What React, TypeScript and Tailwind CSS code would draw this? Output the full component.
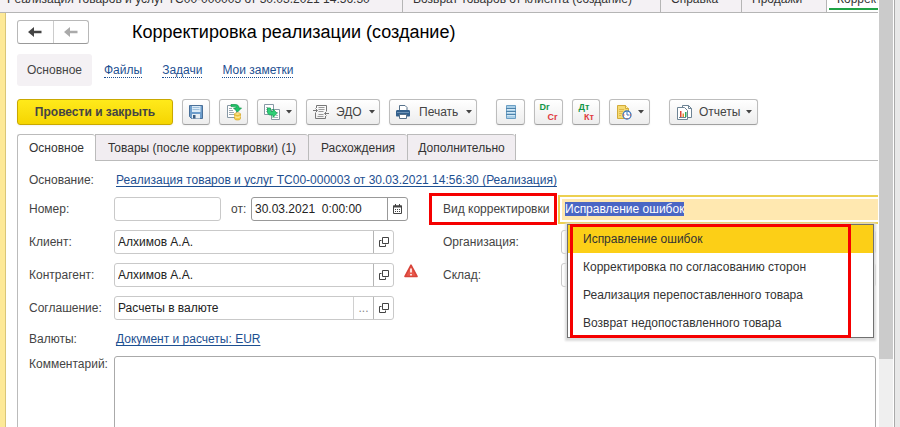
import { ReactNode, useEffect, useRef, useState } from 'react';

const windows = [
  {
    title: 'Реализация товаров и услуг ТС00-000003 от 30.03.2021 14:56:30',
    size: 'w-[403px] pl-[7px]',
  },
  { title: 'Возврат товаров от клиента (создание)', size: 'w-[258px] pl-[10px]' },
  { title: 'Справка', size: 'w-[81px] pl-[10px]' },
  { title: 'Продажи', size: 'w-[85px] pl-[10px]' },
];

const sections = ['Файлы', 'Задачи', 'Мои заметки'];

const pages = [
  { title: 'Товары (после корректировки) (1)', size: 'w-[213px]' },
  { title: 'Расхождения', size: 'w-[99px]' },
  { title: 'Дополнительно', size: 'w-[108px]' },
];

const kinds = [
  'Исправление ошибок',
  'Корректировка по согласованию сторон',
  'Реализация перепоставленного товара',
  'Возврат недопоставленного товара',
];

function SaveIcon() {
  return (
    <svg width="16" height="16" viewBox="0 0 16 16">
      <path d="M1.500 1.500h13v13h-11l-2-2z" fill="#6d9dcb" stroke="#4a7099" />
      <path d="M4 2h8.500v6H4z" fill="#dcebf7" />
      <path d="M4.500 3.500h7M4.500 5.500h7" stroke="#9dbfdc" />
      <path d="M4 10h8v4.500H4z" fill="#e8eef3" />
      <path d="M5 11h2.500v3.500H5z" fill="#3c5d80" />
    </svg>
  );
}

function PostIcon() {
  return (
    <svg width="18" height="18" viewBox="0 0 18 18">
      <path d="M2.500 2.500h9v12h-9z" fill="#fff" stroke="#8798a5" />
      <path d="M4 5.500h3M4 7.500h4M4 9.500h5M4 11.500h5" stroke="#9aa8b2" />
      <path
        d="M6 1.500h4c3 0 4 1.500 4 3.500h2.500L12.500 9 8.500 5H11c0-1-.6-1.400-2-1.400H6z"
        fill="#1fc268"
        stroke="#0f9649"
        strokeWidth=".7"
      />
      <path
        d="M9.500 11v4.500c0 2 6 2 6 0V11z"
        fill="#f6ce49"
        stroke="#d3a52a"
        strokeWidth=".7"
      />
      <ellipse cx="12.500" cy="11" rx="3" ry="1.300" fill="#fde88d" stroke="#d3a52a" strokeWidth=".7" />
      <path d="M9.500 13.300c1 1.400 5 1.400 6 0" fill="none" stroke="#fff3b8" />
    </svg>
  );
}

function BasedOnIcon() {
  return (
    <svg width="18" height="18" viewBox="0 0 18 18">
      <path d="M1.500 1.500h9v10h-9z" fill="#fff" stroke="#8798a5" />
      <path d="M3 4.500h2M3 6.500h2M3 8.500h2" stroke="#a8b4bd" />
      <path d="M8.500 6.500h8v10h-8z" fill="#fff" stroke="#8798a5" />
      <path d="M13 9.500h2M13 12.500h2M11 14.500h4" stroke="#a8b4bd" />
      <path
        d="M4.500 5h3v2.500c0 .7.500 1 1.200 1H10V6l4 4.300-4 4.200V12H8c-2.300 0-3.500-1.200-3.500-3.200z"
        fill="#2fcf78"
        stroke="#12a050"
        strokeWidth=".8"
      />
    </svg>
  );
}

function EdoIcon() {
  return (
    <svg width="16" height="16" viewBox="0 0 16 16" fill="none" stroke="#777">
      <path d="M3.500 4V1.500h10V7M2.500 9v5.500h10V12" />
      <path d="M5.500 3.500h6M5.500 5.500h6M5.500 7.500h5M5.500 10.500h5M4.500 12.500h6" stroke="#999" />
      <path d="M0 6.500h4M2.500 4.500l2 2-2 2M16 9.500h-4M13.500 7.500l-2 2 2 2" />
    </svg>
  );
}

function PrintIcon() {
  return (
    <svg width="16" height="16" viewBox="0 0 16 16">
      <path d="M4.500 7V1.500h5.500l2 2V7" fill="#fff" stroke="#56718a" />
      <path d="M1 7.500C1 6.500 1.500 6 2.500 6h11c1 0 1.500.5 1.500 1.500v4c0 .6-.4 1-1 1H2c-.6 0-1-.4-1-1z" fill="#33618e" />
      <path d="M2 8.500h12" stroke="#6d93b7" />
      <path d="M4.500 10.500h7v4h-7z" fill="#fff" stroke="#56718a" />
    </svg>
  );
}

function RegisterIcon() {
  return (
    <svg width="12" height="16" viewBox="0 0 12 16">
      <path d="M1.500 1.500h9v13h-9z" fill="#a9cfe8" stroke="#6b9fc4" />
      <path d="M1 4.500h10M1 7.500h10M1 10.500h10" stroke="#4f83ab" />
      <path d="M2 5.500h8M2 8.500h8M2 11.500h8" stroke="#d3e8f5" />
    </svg>
  );
}

function ScheduleIcon() {
  return (
    <svg width="18" height="18" viewBox="0 0 18 18">
      <path d="M2.500 2.500h8l3 3v10h-11z" fill="#f5da72" stroke="#d2ab3a" />
      <path d="M10.500 2.500v3h3" fill="#fff2b8" stroke="#d2ab3a" />
      <path d="M4 6.500h5M4 8.500h4M4 10.500h3M4 12.500h2" stroke="#dfb94b" />
      <circle cx="12" cy="12" r="4" fill="#fff" stroke="#3a78bd" strokeWidth="1.300" />
      <path d="M12 9v3h2" stroke="#3a78bd" fill="none" />
      <path d="M8 12h1.500M14.500 12H16M12 15v1" stroke="#e2483d" />
    </svg>
  );
}

function ReportIcon() {
  return (
    <svg width="17" height="17" viewBox="0 0 17 17">
      <path d="M6.500 1.500h6l3 3v9h-9z" fill="#fff" stroke="#6d8394" />
      <path d="M12.500 1.500v3h3" fill="none" stroke="#6d8394" />
      <path d="M1.500 3.500h7l3 3v9h-10z" fill="#fff" stroke="#6d8394" />
      <path d="M3 13.500h7" stroke="#6d8394" />
      <path d="M4 7h1.500v6H4z" fill="#e0443a" />
      <path d="M6.500 9.500H8V13H6.500z" fill="#e58a2e" />
      <path d="M9 8h1.500v5H9z" fill="#2fa95a" />
    </svg>
  );
}

function CalendarIcon() {
  return (
    <svg width="9" height="10" viewBox="0 0 9 10">
      <path d="M.5 2h8v7.500h-8z" fill="#fff" stroke="#444" />
      <path d="M0 1.500h9v2H0z" fill="#444" />
      <path d="M2.500 0v2M6.500 0v2" stroke="#444" />
      <path d="M2 5.500h5M2 7.500h5" stroke="#444" strokeDasharray="1 1" />
    </svg>
  );
}

function OpenIcon() {
  return (
    <svg width="10" height="10" viewBox="0 0 10 10" fill="none" stroke="#444">
      <path d="M3.500.500h6v6h-6z" />
      <path d="M2.500 3.500h-2v6h6V7.500" />
    </svg>
  );
}

function WarningIcon() {
  return (
    <svg width="14" height="14" viewBox="0 0 14 14">
      <path
        d="M7 1.200 13 12.500H1z"
        fill="#e9584b"
        stroke="#d8443a"
        strokeWidth="1.600"
        strokeLinejoin="round"
      />
      <path d="M7 4.500v4M7 10v1.500" stroke="#fff" strokeWidth="1.600" />
    </svg>
  );
}

function Arrow({ className }: { className: string }) {
  return (
    <svg width="14" height="10" viewBox="0 0 14 10" className={className}>
      <path d="M0 5 6 0v3.800h7.500v2.400H6V10z" fill="currentColor" />
    </svg>
  );
}

function Caret() {
  return (
    <svg width="6" height="4" viewBox="0 0 6 4">
      <path d="M0 0h6L3 3.500z" fill="#444" />
    </svg>
  );
}

type ToolButtonProps = {
  label: string;
  className: string;
  children: ReactNode;
};

function ToolButton({ label, className, children }: ToolButtonProps) {
  return (
    <button
      type="button"
      aria-label={label}
      className={`flex h-[26px] shrink-0 items-center rounded-[3px] border border-[#bdbdbd] border-b-[#a0a0a0] bg-linear-to-b from-white to-[#ededed] shadow-xs ${className}`}>
      {children}
    </button>
  );
}

type FieldProps = {
  id: string;
  label: string;
  value: string;
  more?: boolean;
};

function ReferenceField({ id, label, value, more }: FieldProps) {
  return (
    <>
      <label htmlFor={id} className="w-[85px] shrink-0">
        {label}
      </label>
      <div className="flex h-6 w-[280px] shrink-0 rounded-[3px] border border-[#c9c9c9] bg-white">
        <input
          id={id}
          defaultValue={value}
          className="min-w-0 flex-1 px-[3px] text-[#222] outline-none"
        />
        {more && (
          <button
            type="button"
            aria-label="Выбрать"
            className="w-5 border-l border-[#d0d0d0] text-[#888]">
            ...
          </button>
        )}
        <button
          type="button"
          aria-label="Открыть"
          className="flex w-5 items-center justify-center border-l border-[#b5b5b5]">
          <OpenIcon />
        </button>
      </div>
    </>
  );
}

function KindField() {
  const [kind, setKind] = useState(kinds[0]);
  const ref = useRef<HTMLInputElement>(null);

  useEffect(() => {
    ref.current?.focus();
    ref.current?.select();
  }, []);

  return (
    <div className="relative flex-1">
      <div className="h-[29px] border-2 border-r-0 border-[#ecd050] bg-white p-[2px] pr-0">
        <input
          id="kind"
          ref={ref}
          value={kind}
          onChange={(event) => setKind(event.target.value)}
          className="block h-full w-full bg-[#ffe8b0] px-[3px] text-[#222] outline-none selection:bg-[#4a66c4] selection:text-white"
        />
      </div>
      <div
        role="listbox"
        aria-label="Вид корректировки"
        className="absolute top-[29px] right-[4px] left-[9px] z-10 border border-[#707070] bg-white shadow-[0_1px_2px_2px_#dcdcdc]">
        {kinds.map((item) => (
          <button
            key={item}
            type="button"
            role="option"
            aria-selected={item === kind}
            onClick={() => setKind(item)}
            className="block h-7 w-full pl-[15px] text-left text-[#333] aria-selected:bg-[#fccf17]">
            {item}
          </button>
        ))}
        <div className="pointer-events-none absolute -inset-y-px right-[22px] left-[2px] border-[3px] border-[#f50000]" />
      </div>
    </div>
  );
}

export default function App() {
  return (
    <div className="flex h-screen overflow-hidden bg-white font-['Liberation_Sans',Arial,sans-serif] text-[12px] leading-4 text-[#444]">
      <div className="flex min-w-0 flex-1 flex-col">
        <nav className="flex h-[13px] shrink-0 items-end border-b border-[#b5b5b5] bg-[#f4f1f4] whitespace-nowrap text-[#333]">
          {windows.map((item) => (
            <a
              key={item.title}
              href="#"
              className={`shrink-0 overflow-hidden border-r border-[#b5b5b5] pb-[5px] ${item.size}`}>
              {item.title}
            </a>
          ))}
          <a
            href="#"
            aria-current="page"
            className="min-w-0 flex-1 overflow-hidden bg-white pb-[2px] pl-[2px]">
            <span className="block border-b-2 border-[#1fa345] pb-px pl-2">
              Корректировка реализации
            </span>
          </a>
        </nav>

        <div className="flex min-h-0 flex-1">
          <div className="w-[6px] shrink-0 border-r border-[#d9c678] bg-[#fde998]" />
          <main className="flex min-w-0 flex-1 flex-col pl-[11px]">
            <header className="flex items-center gap-[43px] pt-[7px]">
              <div className="flex h-6 w-[72px] rounded-[3px] border border-[#b8b8b8] border-b-[#999]">
                <button
                  type="button"
                  aria-label="Назад"
                  className="flex flex-1 items-center justify-center border-r border-[#ccc]">
                  <Arrow className="text-[#444]" />
                </button>
                <button
                  type="button"
                  aria-label="Вперед"
                  className="flex flex-1 items-center justify-center">
                  <Arrow className="text-[#aaa]" />
                </button>
              </div>
              <h1 className="text-[18px] leading-6 text-black">
                Корректировка реализации (создание)
              </h1>
            </header>

            <nav className="mt-[10px] flex items-center gap-5">
              <span className="-mr-2 flex h-8 w-[75px] items-center justify-center rounded-[3px] bg-[#f4f1f4]">
                Основное
              </span>
              {sections.map((item) => (
                <a
                  key={item}
                  href="#"
                  className="border-b border-dotted border-[#1d4f91] leading-[14px] text-[#1d4f91]">
                  {item}
                </a>
              ))}
            </nav>

            <div className="mt-[13px] flex gap-[9px]">
              <button
                type="button"
                className="h-[26px] w-[156px] shrink-0 rounded-[3px] border border-[#c9a800] bg-linear-to-b from-[#ffea1a] to-[#f5d500] font-bold text-[#444] shadow-xs">
                Провести и закрыть
              </button>
              <ToolButton label="Записать" className="w-7 justify-center">
                <SaveIcon />
              </ToolButton>
              <ToolButton label="Провести" className="w-[29px] justify-center">
                <PostIcon />
              </ToolButton>
              <ToolButton
                label="Создать на основании"
                className="w-10 justify-center gap-[5px]">
                <BasedOnIcon />
                <Caret />
              </ToolButton>
              <ToolButton label="ЭДО" className="w-[74px] gap-[7px] pl-[6px]">
                <EdoIcon />
                ЭДО
                <Caret />
              </ToolButton>
              <ToolButton label="Печать" className="w-[88px] gap-2 pl-[5px]">
                <PrintIcon />
                Печать
                <Caret />
              </ToolButton>
              <ToolButton
                label="Движения документа"
                className="ml-[10px] w-[29px] justify-center">
                <RegisterIcon />
              </ToolButton>
              <ToolButton
                label="Проводки Dr/Cr"
                className="w-[29px] justify-center">
                <span className="flex flex-col font-['Liberation_Sans',Arial,sans-serif] text-[9px] leading-[10px] font-bold">
                  <span className="pr-2 text-[#129647]">Dr</span>
                  <span className="pl-2 text-[#e0393e]">Cr</span>
                </span>
              </ToolButton>
              <ToolButton label="Проводки Дт/Кт" className="w-7 justify-center">
                <span className="flex flex-col font-['Liberation_Sans',Arial,sans-serif] text-[9px] leading-[10px] font-bold">
                  <span className="pr-1 text-[#129647]">Дт</span>
                  <span className="pl-[6px] text-[#e0393e]">Кт</span>
                </span>
              </ToolButton>
              <ToolButton
                label="Запланировать"
                className="w-[41px] justify-center gap-[5px]">
                <ScheduleIcon />
                <Caret />
              </ToolButton>
              <ToolButton
                label="Отчеты"
                className="ml-[10px] w-[89px] gap-[6px] pl-[6px]">
                <ReportIcon />
                Отчеты
                <Caret />
              </ToolButton>
            </div>

            <div role="tablist" className="mt-[9px] flex h-[27px] shrink-0">
              <button
                type="button"
                role="tab"
                aria-selected="true"
                className="w-[78px] shrink-0 rounded-t-[3px] border border-r-0 border-b-0 border-[#bbb] text-[#333]">
                Основное
              </button>
              {pages.map((item) => (
                <button
                  key={item.title}
                  type="button"
                  role="tab"
                  aria-selected="false"
                  className={`shrink-0 rounded-tr-[3px] border border-r-0 border-[#bbb] bg-[#f1edf1] text-[#333] ${item.size}`}>
                  {item.title}
                </button>
              ))}
              <div className="flex-1 border-b border-l border-[#bbb]" />
            </div>

            <form className="flex shrink-0 flex-col border-l border-[#bbb] pt-[9px] pl-[11px]">
              <div className="flex h-5 items-center">
                <span className="w-[87px]">Основание:</span>
                <a href="#" className="text-[#1d4f91] underline underline-offset-2">
                  Реализация товаров и услуг ТС00-000003 от 30.03.2021 14:56:30
                  (Реализация)
                </a>
              </div>

              <div className="mt-[7px] flex h-6 items-center">
                <div className="flex w-[414px] shrink-0 items-center">
                  <label htmlFor="number" className="w-[85px]">
                    Номер:
                  </label>
                  <input
                    id="number"
                    className="h-6 w-[107px] rounded-[3px] border border-[#c9c9c9] px-1"
                  />
                  <label htmlFor="date" className="w-[30px] pl-[10px]">
                    от:
                  </label>
                  <div className="flex h-6 w-[157px] rounded-[3px] border border-[#999]">
                    <input
                      id="date"
                      defaultValue="30.03.2021  0:00:00"
                      className="min-w-0 flex-1 px-[3px] text-[#222] outline-none"
                    />
                    <button
                      type="button"
                      aria-label="Календарь"
                      className="flex w-5 items-center justify-center border-l border-[#999]">
                      <CalendarIcon />
                    </button>
                  </div>
                </div>
                <div className="relative w-[115px] shrink-0">
                  <label htmlFor="kind">Вид корректировки</label>
                  <div className="pointer-events-none absolute -top-2 right-[1px] -bottom-2 -left-[14px] border-[3px] border-[#f50000]" />
                </div>
                <KindField />
              </div>

              <div className="mt-[9px] flex h-6 items-center">
                <div className="flex w-[414px] shrink-0 items-center">
                  <ReferenceField id="client" label="Клиент:" value="Алхимов А.А." />
                </div>
                <label htmlFor="company" className="w-[118px] shrink-0">
                  Организация:
                </label>
                <input
                  id="company"
                  className="mr-[2px] h-6 min-w-0 flex-1 rounded-[3px] border border-[#c9c9c9]"
                />
              </div>

              <div className="mt-[9px] flex h-6 items-center">
                <div className="flex w-[414px] shrink-0 items-center gap-[10px]">
                  <div className="flex items-center">
                    <ReferenceField
                      id="partner"
                      label="Контрагент:"
                      value="Алхимов А.А."
                    />
                  </div>
                  <div className="pb-2">
                    <WarningIcon />
                  </div>
                </div>
                <label htmlFor="store" className="w-[118px] shrink-0">
                  Склад:
                </label>
                <input
                  id="store"
                  className="mr-[2px] h-6 min-w-0 flex-1 rounded-[3px] border border-[#c9c9c9]"
                />
              </div>

              <div className="mt-[9px] flex h-6 items-center">
                <ReferenceField
                  id="agreement"
                  label="Соглашение:"
                  value="Расчеты в валюте"
                  more
                />
              </div>

              <div className="mt-[9px] flex h-5 items-center">
                <span className="w-[87px]">Валюты:</span>
                <a href="#" className="text-[#1d4f91] underline underline-offset-2">
                  Документ и расчеты: EUR
                </a>
              </div>

              <div className="mt-[7px] flex pr-[2px]">
                <label htmlFor="comment" className="w-[85px] shrink-0">
                  Комментарий:
                </label>
                <textarea
                  id="comment"
                  className="h-24 min-w-0 flex-1 resize-none rounded-[3px] border border-[#aaa] p-1"
                />
              </div>
            </form>
          </main>
        </div>
      </div>

      <div className="ml-px w-[14px] shrink-0 bg-[#efefef]">
        <div className="h-[84%] bg-[#cbcbcb]" />
      </div>
      <div className="ml-px w-[6px] shrink-0 border-l border-[#aaa] bg-[#e8e8e8]" />
    </div>
  );
}
